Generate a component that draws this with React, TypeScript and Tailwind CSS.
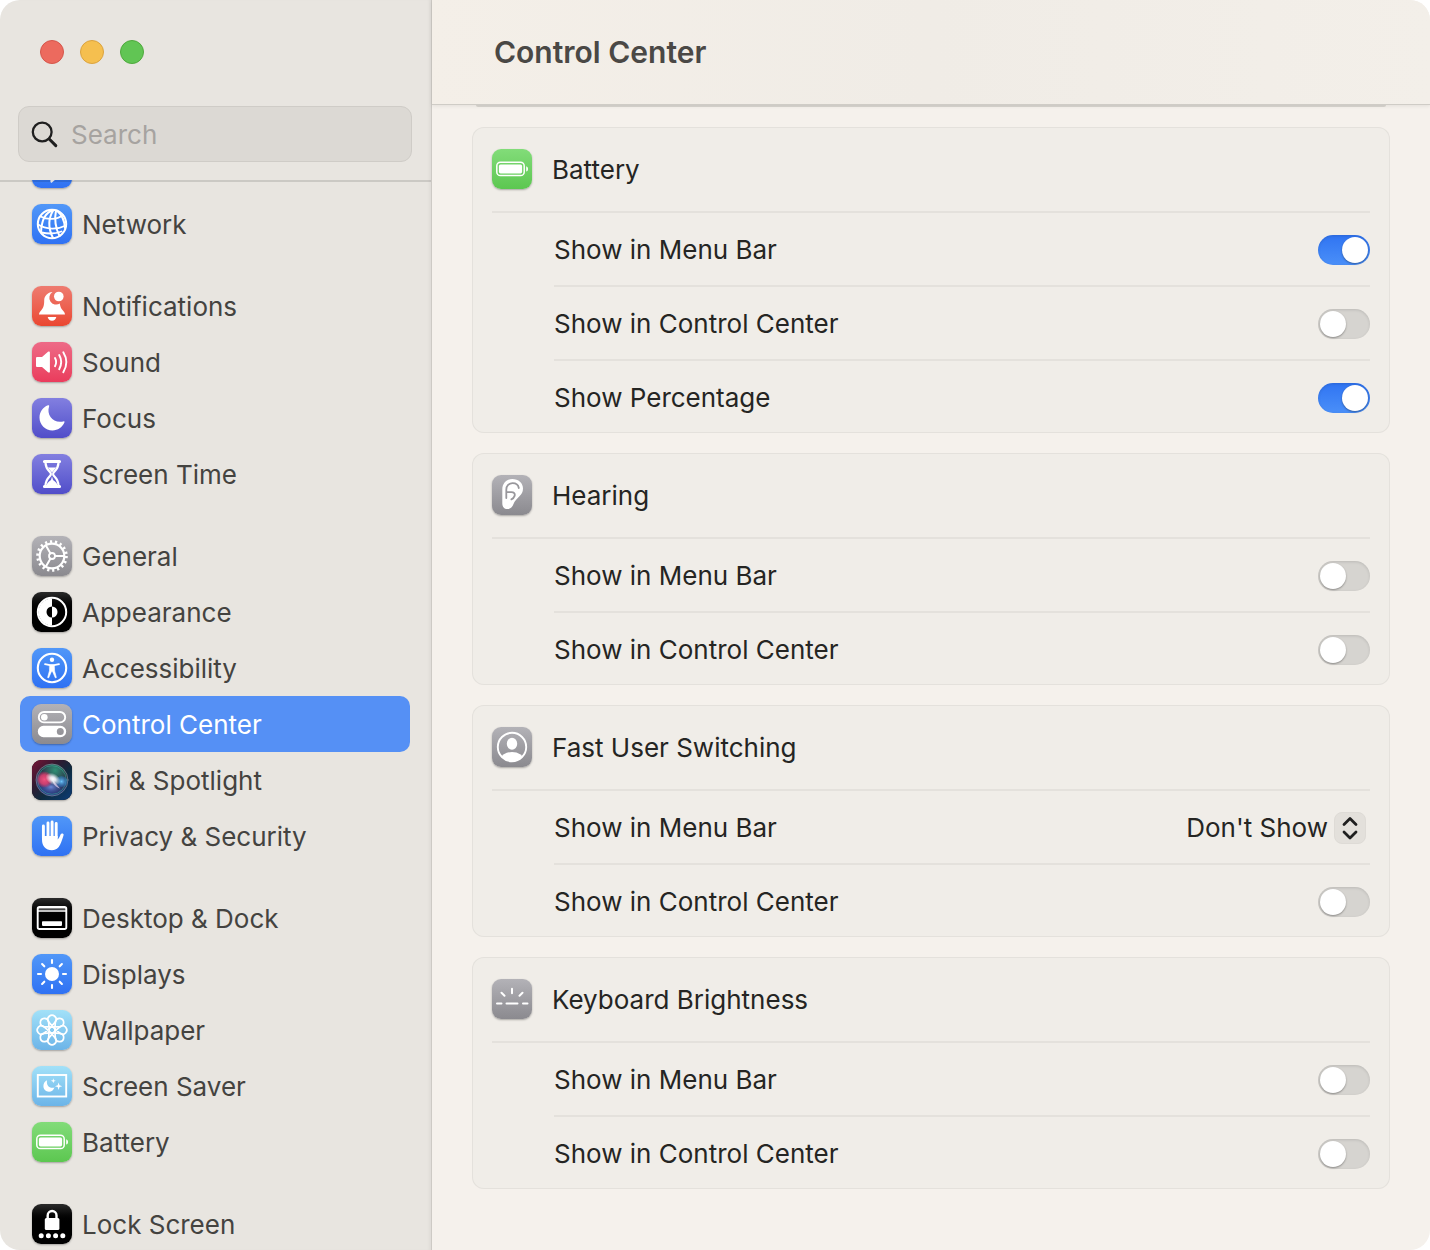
import { useId, useState, type ReactNode } from "react";

const BLUE = "bg-linear-to-b from-[#5197f8] to-[#2f71f3]";
const GRAY = "bg-linear-to-b from-[#b3b2b7] to-[#8b8a8f]";
const BLACK = "bg-linear-to-b from-[#2b2b2b] from-0% to-black to-50%";
const INDIGO = "bg-linear-to-b from-[#837fe0] to-[#514dc9]";
const SKY = "bg-linear-to-b from-[#a2e1f8] to-[#6cb4e8]";
const GREEN = "bg-linear-to-b from-[#82dc79] to-[#5cc750]";

function Tile({ tone, children }: { tone: string; children: ReactNode }) {
  return (
    <span className={`block size-10 shrink-0 overflow-hidden rounded-[9px] shadow-[0_1px_2px_rgba(0,0,0,0.3)] ${tone}`}>
      <svg viewBox="0 0 40 40" className="size-10" fill="none" stroke="white" strokeLinecap="round" strokeLinejoin="round" aria-hidden="true">
        {children}
      </svg>
    </span>
  );
}

const BluetoothIcon = () => (
  <Tile tone={BLUE}>
    <path d="M12 13l16 13-8.500 7.500V6.500L28 14 12 27" strokeWidth="2.200" />
  </Tile>
);

const NetworkIcon = () => (
  <Tile tone={BLUE}>
    <g strokeWidth="2">
      <circle cx="20" cy="20" r="14.200" />
      <path d="M21.500 6C14 8 9.500 16 9 28.500M21.500 6C17 13 15.500 23 21 34M24 6.500C22.500 14 23.500 24 27.500 32M25 6.800C29.500 10.500 32.500 17 33 24" />
      <path d="M8.500 12.500c7 3.500 16 3.500 22.500-1.500M6 20.500c8 5 19 5.500 28 1M9.500 28.500c7 1.500 14 1.300 20-1" strokeWidth="1.800" />
    </g>
  </Tile>
);

const NotificationsIcon = () => (
  <Tile tone="bg-linear-to-b from-[#ee7b70] to-[#ea4630]">
    <path d="M20.500 6c-5 .300-8.300 4-8.300 8.500 0 5-.8 7-2.700 9.500-1.500 1.700-2.500 3-2.500 4.500h26c0-1.500-1-2.800-2.500-4.500-1.500-1.700-2.300-3.700-2.700-6.500A6.600 6.600 0 0 1 20.500 6z" fill="white" stroke="none" />
    <path d="M15.700 31h8.600c-.5 2.400-2 3.800-4.300 3.800s-3.800-1.400-4.300-3.800z" fill="white" stroke="none" />
    <circle cx="26.800" cy="10.500" r="4.800" fill="white" stroke="none" />
  </Tile>
);

const SoundIcon = () => (
  <Tile tone="bg-linear-to-b from-[#ed6a87] to-[#ea3b5c]">
    <path d="M4 16.300c0-.8.500-1.300 1.300-1.300h4.700l6-5.200c.9-.8 1.900-.4 1.900.8v18.800c0 1.200-1 1.600-1.900.8l-6-5.200H5.300c-.8 0-1.300-.5-1.300-1.300z" fill="white" stroke="none" />
    <path d="M23 16c1.500 2.700 1.500 5.500 0 8.200M27.200 13c2.600 4.500 2.600 9.500 0 14.200M31.300 10.200c4 6.500 4 13.500 0 20" strokeWidth="1.900" />
  </Tile>
);

const FocusIcon = () => (
  <Tile tone={INDIGO}>
    <path d="M16 7.300c.8-.3 1.400.3 1.100 1.100-3 8.500 4.500 17.500 14.200 15 .9-.2 1.500.4 1.100 1.200C30.200 29.500 25.800 32.500 20.500 32.500 13.300 32.500 7.500 26.700 7.500 19.500c0-5.500 3.400-10.200 8.500-12.200z" fill="white" stroke="none" />
  </Tile>
);

const ScreenTimeIcon = () => (
  <Tile tone={INDIGO}>
    <path d="M12.500 7.500h15M12.500 32.500h15" strokeWidth="3.200" />
    <path d="M13.500 8c0 5 1.500 7 4 9.500 2 2 2 3 0 5-2.500 2.500-4 4.500-4 9.500M26.500 8c0 5-1.500 7-4 9.500-2 2-2 3 0 5 2.500 2.500 4 4.500 4 9.500" strokeWidth="2.300" />
    <path d="M15.800 13.500h8.400L20 18.500zM20 22.500l1 3.500c2.500 1.500 4 3 4.500 5.500h-11c.5-2.500 2-4 4.500-5.500z" fill="white" stroke="none" />
  </Tile>
);

const GeneralIcon = () => (
  <Tile tone={GRAY}>
    <circle cx="20" cy="20" r="14.300" strokeWidth="3" strokeLinecap="butt" strokeDasharray="2.200 2.793" />
    <circle cx="20" cy="20" r="12.300" strokeWidth="2.200" />
    <circle cx="20" cy="20" r="3" strokeWidth="1.800" />
    <path d="M23 20h9M18.500 17.400l-4.600-7.900M18.500 22.600l-4.600 7.900" strokeWidth="2" />
  </Tile>
);

const AppearanceIcon = () => (
  <Tile tone={BLACK}>
    <circle cx="20" cy="20" r="14.200" strokeWidth="2" />
    <path d="M20 6.500a13.500 13.500 0 0 0 0 27v-8a5.500 5.500 0 0 1 0-11z" fill="white" stroke="none" />
    <path d="M20 14.500a5.500 5.500 0 0 1 0 11z" fill="white" stroke="none" />
  </Tile>
);

const AccessibilityIcon = () => (
  <Tile tone={BLUE}>
    <circle cx="20" cy="20" r="14.200" strokeWidth="2.100" />
    <circle cx="20" cy="11.800" r="2.200" fill="white" stroke="none" />
    <path d="M13 16.200l5 1h4l5-1" strokeWidth="1.700" />
    <path d="M17.700 17h4.600l.3 6 1.800 6.500-1 .4-2.900-6.500h-1l-2.900 6.500-1-.4 1.800-6.500z" fill="white" strokeWidth=".6" />
  </Tile>
);

const ControlCenterIcon = () => (
  <Tile tone={GRAY}>
    <rect x="6.800" y="8" width="26.400" height="10.400" rx="5.200" strokeWidth="1.900" />
    <circle cx="12.300" cy="13.200" r="3.300" fill="white" stroke="none" />
    <path fillRule="evenodd" d="M11.500 21.800h17a5.700 5.700 0 0 1 0 11.400h-17a5.700 5.700 0 0 1 0-11.400zM28.300 24a3.500 3.500 0 1 0 0 7 3.500 3.500 0 0 0 0-7z" fill="white" stroke="none" />
  </Tile>
);

const SiriIcon = () => (
  <Tile tone="bg-black">
    <defs>
      <linearGradient id="siri-base" x1="0" y1="0" x2="1" y2="1">
        <stop offset="0" stopColor="#7a1537" />
        <stop offset=".35" stopColor="#301a30" />
        <stop offset=".6" stopColor="#0e2b3f" />
        <stop offset="1" stopColor="#0d3c78" />
      </linearGradient>
      <radialGradient id="siri-orb" cx=".6" cy=".2" r=".9">
        <stop offset="0" stopColor="#2f8f74" />
        <stop offset=".45" stopColor="#2c3a4c" />
        <stop offset="1" stopColor="#2c3f98" />
      </radialGradient>
      <radialGradient id="siri-pink">
        <stop offset="0" stopColor="#f0527f" />
        <stop offset=".6" stopColor="#e23f70" stopOpacity=".85" />
        <stop offset="1" stopColor="#d52d63" stopOpacity=".15" />
      </radialGradient>
      <radialGradient id="siri-blue">
        <stop offset="0" stopColor="#6fc4fa" />
        <stop offset="1" stopColor="#2b7fd8" stopOpacity=".3" />
      </radialGradient>
      <radialGradient id="siri-glow">
        <stop offset="0" stopColor="white" />
        <stop offset=".35" stopColor="#f3f6ff" stopOpacity=".9" />
        <stop offset="1" stopColor="white" stopOpacity="0" />
      </radialGradient>
      <radialGradient id="siri-floor">
        <stop offset="0" stopColor="#7f9bf0" stopOpacity=".8" />
        <stop offset="1" stopColor="#4a5fd0" stopOpacity="0" />
      </radialGradient>
    </defs>
    <rect width="40" height="40" fill="url(#siri-base)" stroke="none" />
    <circle cx="20" cy="20" r="16" fill="url(#siri-orb)" stroke="#8a9aa5" strokeOpacity=".6" />
    <circle cx="20" cy="20" r="14.300" stroke="#3cc3a0" strokeOpacity=".55" strokeWidth=".8" />
    <ellipse cx="19" cy="27" rx="11" ry="7" fill="url(#siri-floor)" stroke="none" />
    <ellipse cx="12.500" cy="19.500" rx="8" ry="8" fill="url(#siri-pink)" stroke="none" />
    <ellipse cx="29.500" cy="21.500" rx="6" ry="5.500" fill="url(#siri-blue)" stroke="none" />
    <path d="M20 19l8 9.500c-4-1-7-4-8-9.500z" fill="#e6d4f4" fillOpacity=".7" stroke="none" />
    <ellipse cx="21" cy="19" rx="8" ry="5.500" transform="rotate(30 21 19)" fill="url(#siri-glow)" stroke="none" />
  </Tile>
);

const PrivacyIcon = () => (
  <Tile tone={BLUE}>
    <path d="M11.400 10v12M16 7v14M20.100 6v15M24.200 7.500v14" strokeWidth="2.900" />
    <path d="M10 20h15.700v3.400c1.500-1.600 2.300-3.500 3-5.200.5-1.200 3.300-1 2.900.8-.8 3-1.800 6-3.400 9.500-1.700 3.700-4.300 5.700-8.200 5.700-6.500 0-10-4-10-10.700z" fill="white" stroke="none" />
  </Tile>
);

const DesktopIcon = () => (
  <Tile tone={BLACK}>
    <rect x="5.700" y="9" width="28.600" height="22" rx="1.800" strokeWidth="1.900" />
    <path d="M6 13h28" strokeWidth="1.700" />
    <path d="M6 10.800h28" strokeOpacity=".5" strokeWidth="1.500" />
    <rect x="10" y="23.300" width="20" height="4.600" rx=".8" fill="white" stroke="none" />
  </Tile>
);

const DisplaysIcon = () => (
  <Tile tone={BLUE}>
    <circle cx="20" cy="20" r="7" fill="white" stroke="none" />
    <path d="M20 6v3M20 31v3M6 20h3M31 20h3M10.100 10.100l2.200 2.200M27.700 27.700l2.200 2.200M10.100 29.900l2.200-2.200M27.700 12.300l2.200-2.200" strokeWidth="2.100" />
  </Tile>
);

const PETALS = [0, 45, 90, 135, 180, 225, 270, 315];

const WallpaperIcon = () => (
  <Tile tone={SKY}>
    <g strokeWidth="1.700">
      {PETALS.map((angle) => (
        <path key={angle} transform={`rotate(${angle} 20 20)`} d="M21.800 17.800l-5.400-6.200a4.200 4.200 0 1 1 7.200 0l-5.400 6.200" />
      ))}
    </g>
  </Tile>
);

const ScreenSaverIcon = () => (
  <Tile tone={SKY}>
    <rect x="5.800" y="9" width="28.400" height="21.500" strokeWidth="1.900" strokeLinejoin="miter" />
    <path d="M15 14.200c-.8 5.500 2.500 8.500 7.500 7.300-1 2.800-3 4.300-5.500 4.300-3.300 0-5.600-2.400-5.600-5.700 0-2.700 1.400-5 3.600-5.900z" fill="white" stroke="none" />
    <path d="M21.300 12.300l.6 1.900 1.900.6-1.900.6-.6 1.900-.6-1.900-1.900-.6 1.900-.6zM26.600 16.500l.9 2.800 2.800.9-2.800.9-.9 2.800-.9-2.800-2.800-.9 2.800-.9z" fill="white" stroke="none" />
  </Tile>
);

const BatteryIcon = () => (
  <Tile tone={GREEN}>
    <rect x="4.800" y="13.300" width="27.400" height="13.200" rx="3.600" strokeWidth="1.500" />
    <rect x="6.900" y="15.400" width="23.200" height="9" rx="1.600" fill="white" stroke="none" />
    <path d="M34.200 17.300c1.200.4 1.800 1.300 1.800 2.600s-.6 2.200-1.800 2.600z" fill="white" stroke="none" />
  </Tile>
);

const LockIcon = () => (
  <Tile tone={BLACK}>
    <path d="M15.700 15v-3.600a4.400 4.400 0 0 1 8.800 0V15" strokeWidth="2.400" />
    <rect x="12.800" y="14" width="14.600" height="12" rx="1.500" fill="white" stroke="none" />
    <path d="M9.200 31.800h.01M16.400 31.800h.01M23.600 31.800h.01M30.800 31.800h.01" strokeWidth="5" />
  </Tile>
);

const HearingIcon = () => (
  <Tile tone={GRAY}>
    <path d="M20.300 4C14.500 4 10.300 8.500 10.300 14.500v13.800c0 3.700 2 5.800 5 5.800 3.200 0 5-2 6.200-5 1.300-3.200 3.400-5.200 5.700-7.500 2.400-2.300 3.800-4.500 3.800-8C31 8 26.500 4 20.300 4z" fill="white" stroke="none" />
    <path d="M14.300 23v-8.300c0-3.900 2.700-6.500 6.300-6.500 3.500 0 5.700 2 6.200 4.800M14.800 17.200h4.500c2.600 0 4 1.400 3.300 3.700-.6 1.700-1.700 2.800-3.200 3.500" stroke="#98979c" strokeWidth="1.800" />
  </Tile>
);

const UserIcon = () => (
  <Tile tone={GRAY}>
    <clipPath id="user-clip"><circle cx="20" cy="20" r="14" /></clipPath>
    <circle cx="20" cy="20" r="14.200" strokeWidth="1.900" />
    <ellipse cx="20" cy="16.700" rx="5.200" ry="6" fill="white" stroke="none" />
    <ellipse cx="20" cy="33" rx="11.500" ry="8" clipPath="url(#user-clip)" fill="white" stroke="none" />
  </Tile>
);

const KeyboardIcon = () => (
  <Tile tone={GRAY}>
    <path d="M5 24.500h4.500M14.500 24.500h11M31 24.500h4.500M20 9.800v4.500M9.500 13.800l3 3M30.500 13.800l-3 3" strokeWidth="2" />
  </Tile>
);

type Item = { label: string; icon: ReactNode; current?: boolean; iconOnly?: boolean };

const GROUPS: Item[][] = [
  [
    { label: "Bluetooth", icon: <BluetoothIcon />, iconOnly: true },
    { label: "Network", icon: <NetworkIcon /> },
  ],
  [
    { label: "Notifications", icon: <NotificationsIcon /> },
    { label: "Sound", icon: <SoundIcon /> },
    { label: "Focus", icon: <FocusIcon /> },
    { label: "Screen Time", icon: <ScreenTimeIcon /> },
  ],
  [
    { label: "General", icon: <GeneralIcon /> },
    { label: "Appearance", icon: <AppearanceIcon /> },
    { label: "Accessibility", icon: <AccessibilityIcon /> },
    { label: "Control Center", icon: <ControlCenterIcon />, current: true },
    { label: "Siri & Spotlight", icon: <SiriIcon /> },
    { label: "Privacy & Security", icon: <PrivacyIcon /> },
  ],
  [
    { label: "Desktop & Dock", icon: <DesktopIcon /> },
    { label: "Displays", icon: <DisplaysIcon /> },
    { label: "Wallpaper", icon: <WallpaperIcon /> },
    { label: "Screen Saver", icon: <ScreenSaverIcon /> },
    { label: "Battery", icon: <BatteryIcon /> },
  ],
  [{ label: "Lock Screen", icon: <LockIcon /> }],
];

function Sidebar() {
  return (
    <aside className="flex w-[432px] shrink-0 flex-col border-r border-[#cdcac5] bg-[#e8e5e0] shadow-[inset_-3px_0_3px_-1px_rgba(0,0,0,0.04)]">
      <div className="flex gap-4 px-10 pt-10">
        <button type="button" aria-label="Close" className="size-6 rounded-full border border-[#d5564b] bg-[#ec6a5e]" />
        <button type="button" aria-label="Minimize" className="size-6 rounded-full border border-[#dba33f] bg-[#f5bf4f]" />
        <button type="button" aria-label="Zoom" className="size-6 rounded-full border border-[#4fa93d] bg-[#61c554]" />
      </div>
      <label className="mt-[42px] mr-[19px] mb-[18px] ml-[18px] flex h-14 shrink-0 items-center gap-3 rounded-[11px] border border-[#cfccc7] bg-[#dcd9d4] pl-3">
        <svg viewBox="0 0 28 28" className="size-7 shrink-0" fill="none" stroke="#1f1f1f" strokeLinecap="round" aria-hidden="true">
          <circle cx="11.200" cy="12" r="9.400" strokeWidth="2.300" />
          <path d="M18.200 19l6.600 6.600" strokeWidth="3" />
        </svg>
        <input type="search" aria-label="Search" placeholder="Search" className="min-w-0 flex-1 bg-transparent pt-0.5 text-[26px] leading-8 text-[#262626] outline-none placeholder:text-[#a6a3a0]" />
      </label>
      <nav className="relative min-h-0 flex-1 overflow-hidden">
        <div className="absolute inset-x-0 top-0 h-0.5 bg-black/12" />
        <div className="-mt-10 flex flex-col gap-[26px] pr-[21px] pl-5">
          {GROUPS.map((group) => (
            <ul key={group[0].label}>
              {group.map((item) => (
                <li key={item.label}>
                  <a
                    href="#"
                    aria-label={item.label}
                    aria-current={item.current ? "page" : undefined}
                    className={`flex h-14 items-center gap-[10px] rounded-[10px] pl-3 text-[26px] leading-8 whitespace-nowrap ${item.current ? "bg-[#5590f5] text-white" : "text-[#444340]"}`}
                  >
                    {item.icon}
                    {!item.iconOnly && <span className="pt-0.5">{item.label}</span>}
                  </a>
                </li>
              ))}
            </ul>
          ))}
        </div>
      </nav>
    </aside>
  );
}

function SettingRow({ id, label, children }: { id: string; label: string; children: ReactNode }) {
  return (
    <div className="ml-[62px] flex h-[74px] items-center justify-between border-t-2 border-[#e4e1dc] pt-0.5">
      <label htmlFor={id}>{label}</label>
      {children}
    </div>
  );
}

function Toggle({ label, defaultOn = false }: { label: string; defaultOn?: boolean }) {
  const id = useId();
  const [on, setOn] = useState(defaultOn);
  return (
    <SettingRow id={id} label={label}>
      <input
        id={id}
        type="checkbox"
        role="switch"
        checked={on}
        onChange={(e) => setOn(e.target.checked)}
        className="h-[30px] w-[52px] shrink-0 appearance-none rounded-full bg-[#d6d4d0] p-0.5 shadow-[inset_0_1px_3px_rgba(0,0,0,0.12)] before:block before:size-[26px] before:rounded-full before:bg-white before:shadow-[0_1px_2px_rgba(0,0,0,0.35)] checked:bg-linear-to-b checked:from-[#3074f2] checked:to-[#4a8ff8] checked:before:ml-[22px]"
      />
    </SettingRow>
  );
}

function PopUp({ label, options }: { label: string; options: string[] }) {
  const id = useId();
  return (
    <SettingRow id={id} label={label}>
      <div className="relative mr-1">
        <select id={id} className="field-sizing-content h-8 appearance-none bg-transparent pr-[38px] text-right leading-8 outline-none">
          {options.map((option) => (
            <option key={option}>{option}</option>
          ))}
        </select>
        <span className="pointer-events-none absolute top-0 right-0 flex size-8 items-center justify-center rounded-lg border border-[#dedbd6] bg-[#e3e0db]">
          <svg viewBox="0 0 16 24" className="h-6 w-4" fill="none" stroke="#1f1f1f" strokeWidth="2.800" strokeLinecap="round" strokeLinejoin="round" aria-hidden="true">
            <path d="M2 8.500l6-6 6 6M2 16l6 6 6-6" />
          </svg>
        </span>
      </div>
    </SettingRow>
  );
}

function Card({ title, icon, children }: { title: string; icon: ReactNode; children: ReactNode }) {
  return (
    <section className="rounded-xl bg-[#f0ede8] px-5 shadow-[inset_0_0_0_1px_#e4e1dc]">
      <header className="flex h-[84px] items-center gap-5">
        {icon}
        <h2 className="pt-0.5">{title}</h2>
      </header>
      <div className="relative">
        <div className="absolute top-0 left-0 h-0.5 w-[62px] bg-[#e4e1dc]" />
        {children}
      </div>
    </section>
  );
}

export default function App() {
  return (
    <div className="bg-white font-[Inter,sans-serif]">
      <div className="flex h-screen overflow-hidden rounded-[20px]">
        <Sidebar />
        <main className="flex min-w-0 flex-1 flex-col bg-[#f5f1ec] text-[26px] leading-8 text-[#252523]">
          <header className="z-10 flex h-[105px] shrink-0 items-center border-b border-[#cfccc6] bg-linear-to-r from-[#f4efe8] via-[#f0ece6] to-[#f3efe9] pl-[62px] shadow-[0_1px_4px_rgba(0,0,0,0.08)]">
            <h1 className="text-[30px] leading-9 font-semibold text-[#4a4845]">Control Center</h1>
          </header>
          <div className="flex min-h-0 flex-1 flex-col gap-5 overflow-hidden px-10">
            <div className="mx-1 h-0.5 shrink-0 rounded-b-sm bg-[#d8d5cf]" />
            <Card title="Battery" icon={<BatteryIcon />}>
              <Toggle label="Show in Menu Bar" defaultOn />
              <Toggle label="Show in Control Center" />
              <Toggle label="Show Percentage" defaultOn />
            </Card>
            <Card title="Hearing" icon={<HearingIcon />}>
              <Toggle label="Show in Menu Bar" />
              <Toggle label="Show in Control Center" />
            </Card>
            <Card title="Fast User Switching" icon={<UserIcon />}>
              <PopUp label="Show in Menu Bar" options={["Don't Show", "Full Name", "Account Name", "Icon"]} />
              <Toggle label="Show in Control Center" />
            </Card>
            <Card title="Keyboard Brightness" icon={<KeyboardIcon />}>
              <Toggle label="Show in Menu Bar" />
              <Toggle label="Show in Control Center" />
            </Card>
          </div>
        </main>
      </div>
    </div>
  );
}
